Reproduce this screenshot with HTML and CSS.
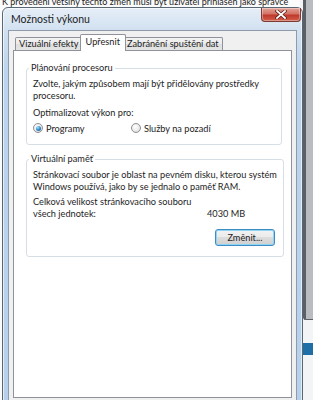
FILE: index.html
```html
<!DOCTYPE html>
<html lang="cs">
<head>
    <meta charset="UTF-8">
    <meta name="viewport" content="width=device-width, initial-scale=1.0">
    <title>Možnosti výkonu</title>
    <link rel="stylesheet" href="styles.css">
</head>
<body>
    <div class="desktop">
        <p class="behind-text">K provedení většiny těchto změn musí být uživatel přihlášen jako správce</p>
        <div class="side-window">
            <div class="side-frame"></div>
            <div class="side-bar"></div>
        </div>

        <div class="dialog">
            <div class="titlebar">
                <span class="title">Možnosti výkonu</span>
                <button class="close-btn" aria-label="Zavřít">
                    <svg width="12" height="9" viewBox="0 0 12 9">
                        <path d="M2 1 L10 8 M10 1 L2 8" stroke="#5a1d14" stroke-width="3.2" stroke-linecap="square"/>
                        <path d="M2 1 L10 8 M10 1 L2 8" stroke="#fff" stroke-width="1.8" stroke-linecap="square"/>
                    </svg>
                </button>
            </div>

            <div class="client">
                <div class="tabs">
                    <div class="tab">Vizuální efekty</div>
                    <div class="tab active">Upřesnit</div>
                    <div class="tab">Zabránění spuštění dat</div>
                </div>

                <div class="panel">
                    <fieldset class="group">
                        <legend>Plánování procesoru</legend>
                        <p class="line">Zvolte, jakým způsobem mají být přidělovány prostředky<br>procesoru.</p>
                        <p class="line gap-5">Optimalizovat výkon pro:</p>
                        <div class="radios">
                            <label class="radio">
                                <span class="radio-dot checked"></span>Programy
                            </label>
                            <label class="radio">
                                <span class="radio-dot"></span>Služby na pozadí
                            </label>
                        </div>
                    </fieldset>

                    <fieldset class="group group-mem">
                        <legend>Virtuální paměť</legend>
                        <p class="line">Stránkovací soubor je oblast na pevném disku, kterou systém<br>Windows používá, jako by se jednalo o paměť RAM.</p>
                        <p class="line gap-3">Celková velikost stránkovacího souboru</p>
                        <div class="size-row">
                            <span class="size-label">všech jednotek:</span>
                            <span>4030 MB</span>
                        </div>
                        <div class="actions">
                            <button class="win-btn">Změnit...</button>
                        </div>
                    </fieldset>
                </div>
            </div>
        </div>
    </div>
</body>
</html>
```

FILE: styles.css
```css
* {
    margin: 0;
    padding: 0;
    box-sizing: border-box;
}

body {
    width: 313px;
    height: 400px;
    overflow: hidden;
    background: #f4f4f4;
    font-family: Lato, 'Noto Sans', sans-serif;
    font-size: 9.2px;
    color: #1e1e1e;
}

.desktop {
    position: relative;
    width: 313px;
    height: 400px;
    overflow: hidden;
    background: #fbfbfb;
}

.behind-text {
    position: absolute;
    top: -4px;
    left: 2px;
    font-size: 9px;
    line-height: 12px;
    white-space: nowrap;
    color: #222;
}

/* window lying behind the dialog on the right */
.side-window {
    position: absolute;
    left: 300px;
    top: 0;
    width: 13px;
    height: 400px;
    background: #f2f4f6;
}

.side-frame {
    height: 320px;
    margin-left: 3px;
    border-left: 3px solid #5c5f63;
    border-bottom: 1px solid #5c5f63;
    border-bottom-left-radius: 3px;
    background: #b9bcc0;
}

.side-bar {
    height: 12px;
    margin-top: 23px;
    background: #1f6ea6;
}

/* dialog window */
.dialog {
    position: absolute;
    left: 2px;
    top: 7px;
    width: 301px;
    height: 400px;
    border: 1px solid #596674;
    border-radius: 6px 6px 0 0;
    background: linear-gradient(180deg, #e6eef7 0px, #d2e1f1 22px, #bcd4ed 60px, #b6d0ec 100%);
    padding: 0 5px;
    display: flex;
    flex-direction: column;
    box-shadow: inset 0 0 0 1px rgba(255, 255, 255, 0.6);
}

.titlebar {
    height: 22px;
    display: flex;
    justify-content: space-between;
    align-items: flex-start;
}

.title {
    font-size: 10.5px;
    margin-top: 5px;
    margin-left: 3px;
    color: #1b1b1b;
}

.close-btn {
    width: 40px;
    height: 14px;
    margin-right: -4px;
    border: 1px solid #7d3a32;
    border-top: none;
    border-radius: 0 0 4px 4px;
    background: linear-gradient(180deg, #e4a298 0%, #d27264 45%, #c0392b 55%, #d05f4c 100%);
    display: flex;
    justify-content: center;
    align-items: center;
    box-shadow: inset 0 0 0 1px rgba(255, 255, 255, 0.35);
}

.client {
    flex: 1;
    background: #f0f0f0;
    border: 1px solid #8d9bab;
    border-bottom: none;
    padding: 3px 4px 8px 4px;
    display: flex;
    flex-direction: column;
}

/* tabs */
.tabs {
    display: flex;
    padding-left: 2px;
    height: 16px;
    align-items: flex-end;
    position: relative;
    z-index: 1;
}

.tab {
    height: 13px;
    line-height: 12px;
    padding: 0 3px;
    border: 1px solid #8e929b;
    border-bottom: none;
    border-radius: 2px 2px 0 0;
    background: linear-gradient(180deg, #f3f3f3 0%, #ebebeb 50%, #dedede 51%, #e5e5e5 100%);
    margin-right: -1px;
    white-space: nowrap;
}

.tab.active {
    line-height: 14px;
    padding: 0 5px;
    margin-left: -2px;
    margin-right: -3px;
    background: #fff;
    position: relative;
    z-index: 2;
    height: 17px;
    margin-bottom: -1px;
}

.panel {
    flex: 1;
    background: #fff;
    border: 1px solid #8e929b;
    padding: 11px 9px 0 12px;
}

/* group boxes */
.group {
    border: 1px solid #d5dfe5;
    border-radius: 3px;
    padding: 0 6px 10px 6px;
}

.group legend {
    margin-left: -4px;
    padding: 0 2px;
    line-height: 12px;
}

.group-mem {
    margin-top: 8px;
}

.line {
    line-height: 12px;
    margin-top: 4px;
    white-space: nowrap;
}

.gap-5 {
    margin-top: 5px;
}

.gap-3 {
    margin-top: 3px;
}

.radios {
    display: flex;
    margin-top: 3px;
    height: 12px;
    align-items: center;
}

.radio {
    display: flex;
    align-items: center;
    gap: 3px;
    width: 98px;
}

.radio-dot {
    width: 10px;
    height: 10px;
    border-radius: 50%;
    border: 1px solid #8c8f94;
    background: radial-gradient(circle at 40% 35%, #ffffff 0%, #e8e8e8 60%, #d2d2d2 100%);
    position: relative;
}

.radio-dot.checked::after {
    content: '';
    position: absolute;
    left: 1.5px;
    top: 1.5px;
    width: 5px;
    height: 5px;
    border-radius: 50%;
    background: radial-gradient(circle at 35% 30%, #a8e0f8 0%, #2b84c8 55%, #155a99 100%);
}

.size-row {
    display: flex;
    line-height: 12px;
}

.size-label {
    width: 174px;
}

.actions {
    display: flex;
    justify-content: flex-end;
    margin-top: 9px;
    padding-right: 2px;
}

.win-btn {
    width: 60px;
    height: 17px;
    font-family: inherit;
    font-size: 9.2px;
    color: #1e1e1e;
    border: 1px solid #3c8dc4;
    border-radius: 3px;
    background: linear-gradient(180deg, #f2f2f2 0%, #ebebeb 49%, #dddddd 50%, #cfcfcf 100%);
    box-shadow: inset 0 0 0 1px #8fd3f5;
}
```
